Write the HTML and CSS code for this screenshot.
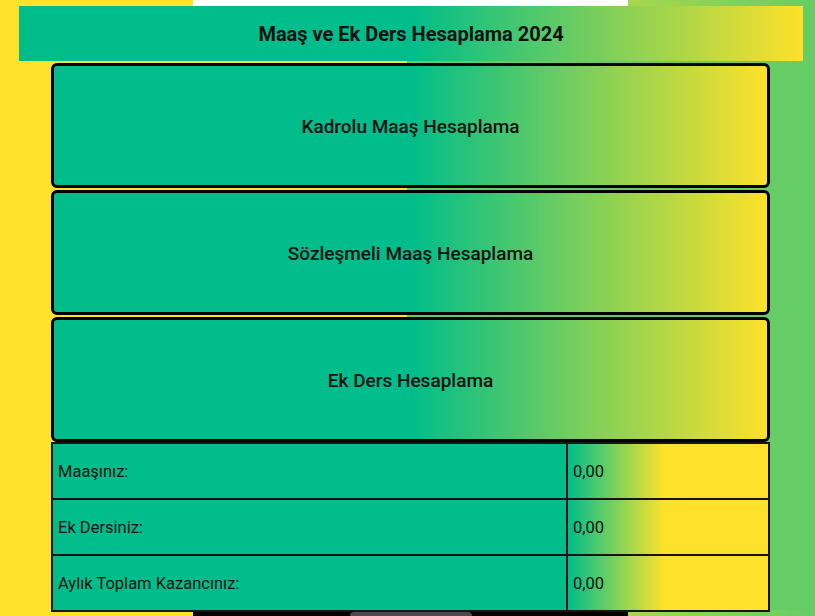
FILE: index.html
```html
<!DOCTYPE html>
<html lang="tr">
<head>
<meta charset="utf-8">
<title>Maaş ve Ek Ders Hesaplama 2024</title>
<link rel="stylesheet" href="styles.css">
</head>
<body>
  <header class="topbar">
    <h1 class="title">Maaş ve Ek Ders Hesaplama 2024</h1>
  </header>
  <main class="content">
    <button class="calc-btn">Kadrolu Maaş Hesaplama</button>
    <button class="calc-btn">Sözleşmeli Maaş Hesaplama</button>
    <button class="calc-btn">Ek Ders Hesaplama</button>
    <table class="results">
      <tr><td class="label">Maaşınız:</td><td class="value">0,00</td></tr>
      <tr><td class="label">Ek Dersiniz:</td><td class="value">0,00</td></tr>
      <tr><td class="label">Aylık Toplam Kazancınız:</td><td class="value">0,00</td></tr>
    </table>
  </main>
  <div class="home-pill"></div>
</body>
</html>
```
FILE: styles.css
```css
html, body {
  height: 100%;
}
body {
  margin: 0;
  position: relative;
  overflow: hidden;
  font-family: Roboto, "Noto Sans", sans-serif;
  color: #111;
  background:
    linear-gradient(to right, #fde12a 193px, #ffffff 193px 628px, #a9d74b 628px, #66cc66 815px) top left / 100% 6px no-repeat,
    linear-gradient(to right, #fde12a 193px, #000000 193px 628px, #a9d74b 628px, #66cc66 815px) bottom left / 100% 6px no-repeat,
    linear-gradient(to right, #fde12a 50%, #66cc66 50%);
}
.topbar {
  margin: 6px 12px 0 19px;
  height: 55px;
  display: flex;
  align-items: center;
  justify-content: center;
  background: linear-gradient(to right, #00bd8b 50%, #fde12a 100%);
}
.title {
  margin: 0;
  font-size: 20px;
  font-weight: 700;
  color: #111;
}
.content {
  margin: 2px 45px 0 51px;
  display: flex;
  flex-direction: column;
  gap: 2px;
}
.calc-btn {
  height: 125px;
  border: 3px solid #000;
  border-radius: 6px;
  background: linear-gradient(to right, #00bd8b 50%, #fde12a 100%);
  font-family: Roboto, "Noto Sans", sans-serif;
  font-size: 19px;
  font-weight: 500;
  color: #111;
  padding: 2px 0 0;
}
.results {
  width: 100%;
  margin-top: -2px;
  border-collapse: collapse;
  border: 2px solid #151515;
}
.results td {
  height: 54px;
  border: 2px solid #151515;
  padding: 0 5px;
  font-size: 16.5px;
  color: #111;
}
.label {
  background: #00bd8b;
}
.value {
  width: 190px;
  background: linear-gradient(to right, #00bd8b 0%, #9fd64f 30%, #fde12a 48%);
}
.home-pill {
  position: absolute;
  left: 350px;
  bottom: -4px;
  width: 122px;
  height: 8px;
  border-radius: 6px;
  background: #4a4a4a;
}
```
